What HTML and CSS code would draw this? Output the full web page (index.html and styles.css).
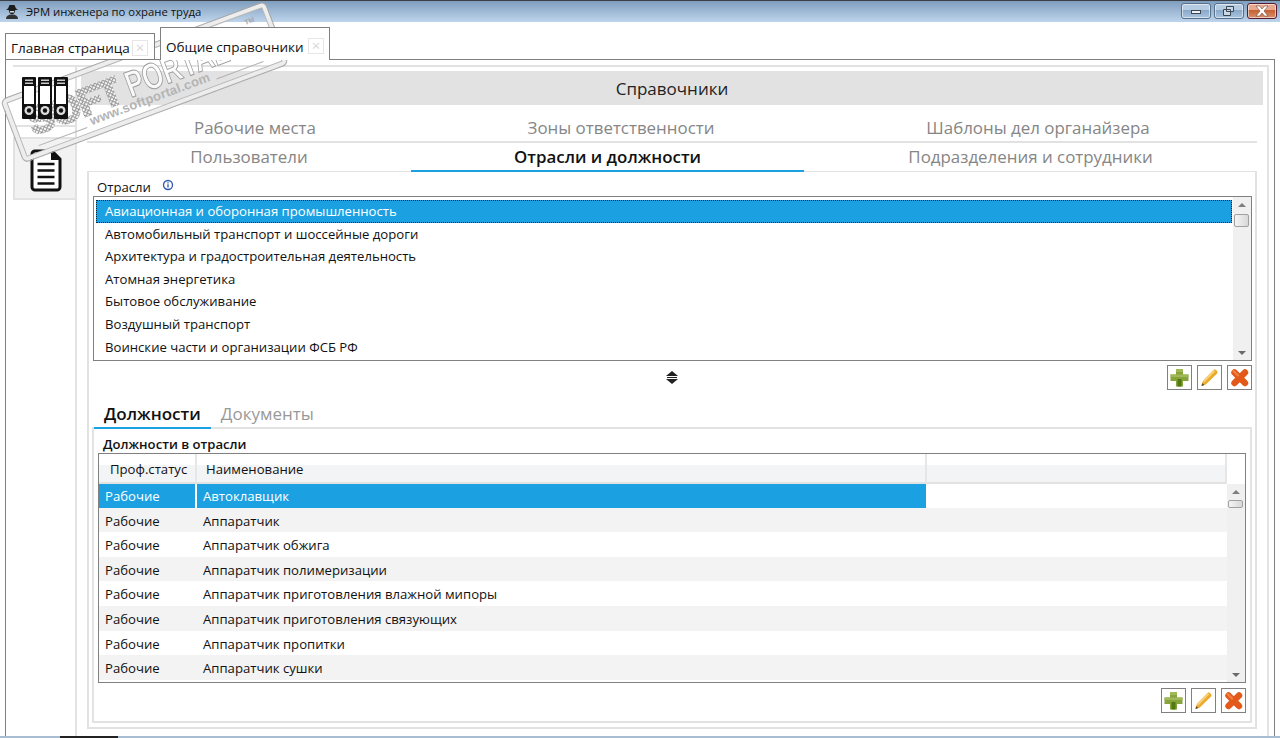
FILE: index.html
```html
<!DOCTYPE html>
<html lang="ru">
<head>
<meta charset="utf-8">
<title>ЭРМ инженера по охране труда</title>
<link rel="stylesheet" href="styles.css">
</head>
<body>
<svg class="defs" width="0" height="0">
  <symbol id="plus" viewBox="0 0 25 25">
    <path d="M9 4h7v5.500h5.500v6.500H16v5.500H9V16H3.500V9.500H9z" fill="#86a33c"/>
    <path d="M10.500 14h4v7.500h-4z" fill="#4f7a12"/>
    <path d="M9 4h7v3H9zM3.500 9.500h18V12h-18z" fill="#9fb858"/>
  </symbol>
  <symbol id="pencil" viewBox="0 0 25 25">
    <path d="M16.500 5c1.800-1.600 5 1.600 3.600 3.600L8.800 19.500 4.500 21l1.300-5z" fill="#eca92c"/>
    <path d="M5.800 16 16.500 5l1.800 1.200L7.200 17.500z" fill="#f8d27a"/>
    <path d="M4.500 21l.7-2.800 2.200 1.900z" fill="#4a4030"/>
  </symbol>
  <symbol id="cross" viewBox="0 0 25 25">
    <path d="M7.500 7.500l10.500 10.500M18 7.500 7.500 18" stroke="#e2591a" stroke-width="6.400" stroke-linecap="round" fill="none"/>
    <path d="M6.500 6l4.500 4.500" stroke="#ef7f42" stroke-width="2.400" stroke-linecap="round" fill="none"/>
  </symbol>
</svg>

<header class="titlebar">
  <svg class="app-icon" viewBox="0 0 16 16" width="16" height="16"><path d="M4 4.500 5.500 1h5L12 4.500l2 1-3 .8c0 2.500-1.300 4-3 4s-3-1.500-3-4l-3-.8z" fill="#1c1c1c"/><path d="M2 15c0-3 2-4.500 6-4.500s6 1.500 6 4.500z" fill="#333"/><path d="M6 7h4v1.500H6z" fill="#dcdcdc"/></svg>
  <span class="app-title">ЭРМ инженера по охране труда</span>
  <div class="win-buttons">
    <span class="win-btn"><i class="min-glyph"></i></span>
    <span class="win-btn"><svg width="14" height="12" viewBox="0 0 14 12"><path d="M4.500 1.500h7v5h-7zM1.500 4.500h7v6h-7z" fill="#c8d8e8" stroke="#3c4650"/></svg></span>
    <span class="win-btn win-close"><svg width="14" height="12" viewBox="0 0 14 12"><path d="M1 1h3.500L7 4l2.500-3H13L9 6l4 5H9.500L7 8l-2.500 3H1l4-5z" fill="#fff" stroke="#5a3020" stroke-width=".5"/></svg></span>
  </div>
</header>

<nav class="doc-tabs">
  <div class="doc-tab doc-tab-back">Главная страница<span class="tab-x">×</span></div>
  <div class="doc-tab doc-tab-active">Общие справочники<span class="tab-x">×</span></div>
</nav>

<main class="frame">
  <div class="ribbon">
    <aside class="sidebar">
      <div class="side-item side-item-binders">
        <svg class="binders" width="46" height="42" viewBox="0 0 46 42">
          <g id="b1">
            <rect x="0" y="0" width="14" height="42" rx="1" fill="#111"/>
            <rect x="3" y="2.500" width="8" height="1.500" fill="#ccc"/>
            <rect x="3" y="5.500" width="8" height="1.500" fill="#ccc"/>
            <rect x="2" y="9" width="10" height="18" fill="#fff"/>
            <circle cx="7" cy="33.500" r="4.500" fill="#ddd"/><circle cx="7" cy="33.500" r="2.200" fill="#111"/>
          </g>
          <use href="#b1" x="16"/><use href="#b1" x="32"/>
        </svg>
      </div>
      <div class="side-item side-item-active">
        <svg width="32" height="43" viewBox="0 0 32 43">
          <path d="M5 2h17l8 8v28a3 3 0 0 1-3 3H5a3 3 0 0 1-3-3V5a3 3 0 0 1 3-3z" fill="#fff" stroke="#111" stroke-width="3"/>
          <path d="M21 2l9 9h-9z" fill="#111"/>
          <path d="M7.500 15h17M7.500 21.500h17M7.500 28h17M7.500 34.500h17" stroke="#111" stroke-width="2.600"/>
        </svg>
      </div>
    </aside>
    <section class="workspace">
      <h1 class="page-head">Справочники</h1>
      <div class="sections">
        <div class="nav-row nav-row-top">
          <span class="nav-item">Рабочие места</span>
          <span class="nav-item">Зоны ответственности</span>
          <span class="nav-item">Шаблоны дел органайзера</span>
        </div>
        <div class="nav-row nav-row-bottom">
          <span class="nav-item">Пользователи</span>
          <span class="nav-item nav-item-active">Отрасли и должности</span>
          <span class="nav-item">Подразделения и сотрудники</span>
        </div>
        <div class="panel">
          <div class="list-label">Отрасли
            <svg class="info" width="12" height="12" viewBox="0 0 12 12"><circle cx="6" cy="6" r="4.500" fill="#fff" stroke="#2f56b0" stroke-width="1.300"/><path d="M6 3.200v1.200M6 5.300v3.200" stroke="#2f56b0" stroke-width="1.300"/></svg>
          </div>
          <div class="listbox">
            <ul class="list-items">
              <li class="list-item list-item-selected">Авиационная и оборонная промышленность</li>
              <li class="list-item">Автомобильный транспорт и шоссейные дороги</li>
              <li class="list-item">Архитектура и градостроительная деятельность</li>
              <li class="list-item">Атомная энергетика</li>
              <li class="list-item">Бытовое обслуживание</li>
              <li class="list-item">Воздушный транспорт</li>
              <li class="list-item">Воинские части и организации ФСБ РФ</li>
            </ul>
            <div class="scrollbar">
              <span class="arrow-up"></span><span class="thumb"></span><span class="arrow-down"></span>
            </div>
          </div>
          <div class="list-tools">
            <span class="splitter"><i class="split-up"></i><i class="split-line"></i><i class="split-down"></i></span>
            <div class="tool-group">
              <span class="tool"><svg width="25" height="25"><use href="#plus"/></svg></span>
              <span class="tool"><svg width="25" height="25"><use href="#pencil"/></svg></span>
              <span class="tool"><svg width="25" height="25"><use href="#cross"/></svg></span>
            </div>
          </div>
          <div class="sub-tabs">
            <span class="sub-tab sub-tab-active">Должности</span>
            <span class="sub-tab">Документы</span>
          </div>
          <div class="group">
            <div class="group-title">Должности в отрасли</div>
            <div class="grid">
              <div class="grid-head">
                <span class="col-status">Проф.статус</span>
                <span class="col-name">Наименование</span>
                <span class="col-rest"></span>
              </div>
              <div class="grid-body">
                <div class="rows">
                  <div class="row row-selected"><span class="cell-status">Рабочие</span><span class="cell-name">Автоклавщик</span></div>
                  <div class="row row-alt"><span class="cell-status">Рабочие</span><span class="cell-name">Аппаратчик</span></div>
                  <div class="row"><span class="cell-status">Рабочие</span><span class="cell-name">Аппаратчик обжига</span></div>
                  <div class="row row-alt"><span class="cell-status">Рабочие</span><span class="cell-name">Аппаратчик полимеризации</span></div>
                  <div class="row"><span class="cell-status">Рабочие</span><span class="cell-name">Аппаратчик приготовления влажной мипоры</span></div>
                  <div class="row row-alt"><span class="cell-status">Рабочие</span><span class="cell-name">Аппаратчик приготовления связующих</span></div>
                  <div class="row"><span class="cell-status">Рабочие</span><span class="cell-name">Аппаратчик пропитки</span></div>
                  <div class="row row-alt"><span class="cell-status">Рабочие</span><span class="cell-name">Аппаратчик сушки</span></div>
                </div>
                <div class="scrollbar">
                  <span class="arrow-up"></span><span class="thumb"></span><span class="arrow-down"></span>
                </div>
              </div>
            </div>
            <div class="group-tools">
              <span class="tool"><svg width="25" height="25"><use href="#plus"/></svg></span>
              <span class="tool"><svg width="25" height="25"><use href="#pencil"/></svg></span>
              <span class="tool"><svg width="25" height="25"><use href="#cross"/></svg></span>
            </div>
          </div>
        </div>
      </div>
    </section>
  </div>
</main>

<div class="taskbar"><span class="task-dark"></span></div>

<div class="watermark">
  <span class="wm-soft">SOFT</span>
  <span class="wm-portal">PORTAL</span>
  <span class="wm-tm">TM</span>
  <span class="wm-url">www.softportal.com</span>
  <i class="wm-line wm-line-left"></i>
  <i class="wm-line wm-line-right"></i>
</div>
</body>
</html>
```
FILE: styles.css
```css
* { box-sizing: border-box; }
html, body { margin: 0; padding: 0; }
body {
  width: 1280px;
  height: 738px;
  overflow: hidden;
  position: relative;
  background: #fff;
  color: #111;
  font-family: "Open Sans", "Noto Sans", sans-serif;
  font-size: 13.15px;
}
.defs { position: absolute; }

/* title bar */
.titlebar {
  height: 22px;
  display: flex;
  align-items: center;
  border-top: 1px solid #3c3f44;
  padding: 0 3px 0 4px;
  background: linear-gradient(#7f9dbd, #a2bcd8 55%, #bed4ec);
}
.app-icon { flex: none; margin-right: 6px; }
.app-title { font-size: 11.3px; color: #111; }
.win-buttons { margin-left: auto; display: flex; gap: 3px; margin-top: -2px; }
.win-btn {
  width: 30px;
  height: 16px;
  display: flex;
  align-items: center;
  justify-content: center;
  border: 1px solid #56708c;
  border-radius: 3px;
  background: linear-gradient(#b5cbe2 0 45%, #8aa9c9 45%, #a9c4df);
  box-shadow: inset 0 0 0 1px rgba(255,255,255,.55);
}
.win-close {
  border-color: #5a1a30;
  background: linear-gradient(#e6a98f 0 45%, #c8602f 45%, #d69070);
}
.min-glyph {
  display: block;
  width: 10px;
  height: 4px;
  margin-top: 2px;
  background: #eef2f6;
  border: 1px solid #3c4650;
}

/* document tabs */
.doc-tabs {
  height: 37px;
  display: flex;
  align-items: flex-end;
  padding-left: 5px;
  gap: 5px;
  position: relative;
  z-index: 1;
}
.doc-tab {
  display: flex;
  align-items: center;
  border: 1px solid #808080;
  border-bottom: 0;
  background: #fff;
  font-size: 13.5px;
  margin-bottom: -1px;
}
.doc-tab-back { width: 150px; height: 27px; padding: 2px 0 0 5px; border-bottom: 1px solid #808080; }
.doc-tab-active { width: 170px; height: 33px; padding: 5px 0 0 5px; }
.tab-x {
  width: 16px;
  height: 16px;
  margin-left: auto;
  margin-right: 6px;
  border: 1px solid #e6e6e6;
  color: #d8d8d8;
  font-size: 15px;
  line-height: 13px;
  text-align: center;
}
.doc-tab-active .tab-x { margin-right: 5px; margin-top: -1px; }

/* outer frame */
.frame {
  width: 1270px;
  height: 690px;
  margin-left: 5px;
  padding: 5px 5px 0 7px;
  border: 1px solid #808080;
}
.ribbon {
  height: 100%;
  display: flex;
  border-top: 2px solid #e2e2e2;
  border-right: 2px solid #e2e2e2;
}
.sidebar {
  width: 64px;
  flex: none;
  border-right: 2px solid #e2e2e2;
}
.side-item {
  height: 60px;
  display: flex;
  justify-content: center;
  padding-top: 10px;
  border-bottom: 2px solid #e2e2e2;
  margin-bottom: 10px;
}
.side-item-binders { padding-left: 2px; }
.binders { position: relative; z-index: 3; }
.side-item-active {
  height: 63px;
  padding-top: 10px;
  padding-left: 1px;
  border: 2px solid #e2e2e2;
  border-right: 0;
  background: #f2f2f2;
}
.workspace { flex: 1; min-width: 0; padding: 4px 4px 0 4px; }
.page-head {
  height: 34px;
  margin: 0;
  background: #e2e2e2;
  font-size: 17px;
  font-weight: 400;
  line-height: 36px;
  text-align: center;
  color: #222;
}
.sections { margin: 0 6px; }
.nav-row {
  display: grid;
  font-size: 16.9px;
  color: #868686;
  text-align: center;
}
.nav-row-top {
  height: 38px;
  grid-template-columns: 336px 396px 438px;
  border-bottom: 2px solid #e2e2e2;
  line-height: 45px;
}
.nav-row-bottom {
  height: 28px;
  grid-template-columns: 324px 393px 453px;
  line-height: 28px;
  position: relative;
  z-index: 1;
}
.nav-item-active {
  height: 29px;
  color: #111;
  font-weight: 600;
  border-bottom: 2px solid #1ba1e2;
}

/* panel */
.panel {
  height: 558px;
  border: 2px solid #e2e2e2;
  border-top-width: 1px;
  padding: 0 3px 0 4px;
}
.list-label { height: 24px; padding: 5px 0 0 4px; line-height: 20px; }
.info { margin-left: 8px; vertical-align: 1px; }
.listbox {
  height: 165px;
  display: flex;
  border: 1px solid #808080;
  padding: 3px 0 0 2px;
}
.list-items { flex: 1; margin: 0; padding: 0; list-style: none; }
.list-item {
  height: 22.6px;
  padding-left: 9px;
  line-height: 23.6px;
  white-space: nowrap;
}
.list-item-selected {
  background: #1ba1e2;
  color: #fff;
  outline: 1px dotted #123;
  outline-offset: -1px;
}
.scrollbar {
  width: 18px;
  flex: none;
  position: relative;
  background: #f0f0f0;
}
.listbox .scrollbar { margin: -3px 0 0 1px; }
.arrow-up, .arrow-down {
  position: absolute;
  left: 5px;
  width: 0;
  height: 0;
  border-left: 4px solid transparent;
  border-right: 4px solid transparent;
}
.arrow-up { top: 6px; border-bottom: 4px solid #7e7e7e; }
.arrow-down { bottom: 5px; border-top: 4px solid #6a6a6a; }
.thumb {
  position: absolute;
  left: 1px;
  top: 17px;
  width: 15px;
  height: 13px;
  border: 1px solid #a0a0a0;
  border-radius: 2px;
  background: linear-gradient(90deg, #f4f4f4, #d8d8d8);
}
.grid .thumb { top: 16px; height: 8px; }
.list-tools {
  height: 35px;
  position: relative;
  padding-top: 4px;
}
.tool-group, .group-tools { display: flex; justify-content: flex-end; gap: 5px; }
.tool {
  width: 25px;
  height: 25px;
  display: block;
  border: 1px solid #808080;
  background: #fff;
}
.tool svg { display: block; margin: -1px; }
.splitter {
  position: absolute;
  left: 573px;
  top: 10px;
  width: 12px;
  height: 14px;
}
.splitter i { position: absolute; display: block; }
.split-up { left: 0; top: 0; border: 6px solid transparent; border-top: 0; border-bottom: 5px solid #222; }
.split-line { left: 1px; top: 6px; width: 10px; height: 1px; background: #222; }
.split-down { left: 0; top: 8px; border: 6px solid transparent; border-bottom: 0; border-top: 5px solid #222; }

/* sub tabs */
.sub-tabs { display: flex; height: 31px; margin-left: 1px; position: relative; z-index: 1; }
.sub-tab {
  padding: 0 10px;
  font-size: 17px;
  line-height: 35px;
  color: #999;
  height: 33px;
}
.sub-tab-active {
  color: #111;
  font-weight: 600;
  border-bottom: 2px solid #1ba1e2;
}

/* group box */
.group {
  height: 296px;
  margin-left: -1px;
  border: 2px solid #e2e2e2;
  padding: 0 4px 0 4px;
}
.group-title { height: 24px; padding: 5px 0 0 5px; font-weight: 600; line-height: 20px; }
.grid {
  height: 230px;
  border: 1px solid #808080;
  display: flex;
  flex-direction: column;
}
.grid-head {
  height: 30px;
  flex: none;
  display: flex;
  line-height: 30px;
  background: linear-gradient(#fff 0 38%, #f3f4f6 38%);
  padding-right: 18px;
  position: relative;
}
.grid-head::after {
  content: "";
  position: absolute;
  right: 0;
  top: 0;
  width: 18px;
  height: 30px;
  background: #fff;
}
.col-status { width: 98px; padding-left: 11px; border-right: 2px solid #e6e6e6; border-bottom: 2px solid #e2e2e2; }
.col-name { width: 730px; padding-left: 9px; border-right: 2px solid #e6e6e6; border-bottom: 2px solid #e2e2e2; }
.col-rest { flex: 1; border-right: 2px solid #e6e6e6; border-bottom: 2px solid #e2e2e2; }
.grid-body { flex: 1; display: flex; min-height: 0; }
.rows { flex: 1; min-width: 0; }
.row {
  height: 24.6px;
  display: flex;
  line-height: 26px;
}
.row-alt { background: #f3f3f3; }
.cell-status { width: 98px; padding-left: 6px; }
.cell-name { padding-left: 6px; }
.row-selected { height: 23.6px; line-height: 24.4px; color: #fff; }
.row-selected .cell-status { background: #1ba1e2; margin-right: 2px; width: 96px; }
.row-selected .cell-name { background: #1ba1e2; width: 729px; }
.group-tools { padding-top: 5px; }

/* taskbar */
.taskbar {
  position: absolute;
  left: 0;
  right: 0;
  bottom: 0;
  height: 2px;
  background: #a9bdd2;
}
.task-dark {
  display: block;
  width: 58px;
  height: 2px;
  margin-left: 60px;
  background: #222;
}

/* watermark overlay */
.watermark {
  position: absolute;
  left: 3px;
  top: 48px;
  width: 283px;
  height: 68px;
  transform: rotate(-20.500deg);
  border: 1px solid #a8a8a8;
  border-radius: 6px;
  box-shadow: inset 0 0 0 4px rgba(255,255,255,.75), inset 0 0 0 5px #b8b8b8;
  pointer-events: none;
}
.wm-soft, .wm-portal, .wm-tm, .wm-url, .wm-line { position: absolute; }
.wm-soft {
  left: 18px;
  top: 12px;
  font: 700 38px/38px "Liberation Sans", sans-serif;
  letter-spacing: -1px;
  -webkit-text-stroke: 3px transparent;
  color: transparent;
  background: radial-gradient(circle, #fff 0 .8px, #8e8e8e 1.100px 1.800px, rgba(255,255,255,.85) 2.100px) 0 0 / 4.300px 4.300px;
  -webkit-background-clip: text;
  background-clip: text;
}
.wm-portal {
  left: 122px;
  top: 12px;
  font: 700 37px/37px "Liberation Sans", sans-serif;
  color: rgba(255,255,255,.8);
  -webkit-text-stroke: 1px #9c9c9c;
  transform: scaleX(.72);
  transform-origin: left top;
}
.wm-tm { left: 255px; top: 9px; font: 700 7px/8px "Liberation Sans", sans-serif; color: #a8a8a8; }
.wm-url { left: 76px; top: 44px; font: 700 13px/14px "Liberation Sans", sans-serif; color: #b4b4b4; letter-spacing: .2px; }
.wm-line { top: 55px; height: 1px; background: #b0b0b0; }
.wm-line-left { left: 19px; width: 52px; }
.wm-line-right { left: 209px; width: 50px; }
```
